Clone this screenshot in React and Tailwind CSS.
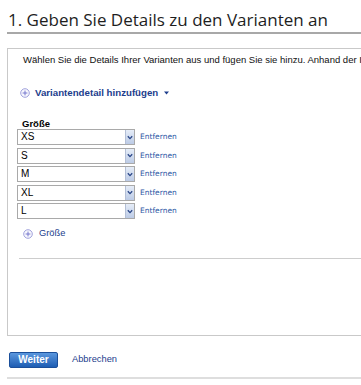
import { useState } from 'react';

const sizes = ['XS', 'S', 'M', 'XL', 'L'];

function PlusIcon() {
  return (
    <svg width="10" height="10" viewBox="0 0 10 10" className="shrink-0">
      <circle cx="5" cy="5" r="4.3" fill="#f7f7fd" stroke="#9597d8" strokeWidth="0.9" />
      <path d="M5 2.6v4.8M2.6 5h4.8" stroke="#6c6ec9" strokeWidth="0.9" />
    </svg>
  );
}

function SizeSelect({ value }) {
  return (
    <div className="flex items-center h-[16px]">
      <div className="flex items-stretch w-[118px] h-[16px] border border-[#a9a9a9] bg-white">
        <div className="flex-1 pl-[3px] text-[10px] leading-[14px] text-black">{value}</div>
        <div className="w-[9px] flex items-center justify-center border-l border-[#b3bfd6] bg-gradient-to-b from-[#e6edf8] to-[#bccbe6]">
          <svg width="6" height="5" viewBox="0 0 6 5">
            <path d="M0.8 1.2L3 3.6L5.2 1.2" fill="none" stroke="#2a4687" strokeWidth="1.3" />
          </svg>
        </div>
      </div>
      <a className="ml-[5px] text-[7.5px] leading-[10px] text-[#2a56a3] font-['DejaVu_Sans',sans-serif] cursor-pointer">
        Entfernen
      </a>
    </div>
  );
}

export default function App() {
  const [items] = useState(sizes);

  return (
    <div className="w-[361px] h-[385px] overflow-hidden bg-white pl-[7px] font-['Liberation_Sans',Arial,sans-serif]">
      <h1 className="pt-[9px] pb-[1px] pl-[1px] text-[17px] leading-[22px] text-[#1e1e1e] font-['Open_Sans',sans-serif] font-normal border-b-2 border-[#a8a8a8] whitespace-nowrap">
        1. Geben Sie Details zu den Varianten an
      </h1>

      <div className="mt-[14px] w-[370px] h-[288px] border border-[#c9c9c9] flex flex-col overflow-hidden">
        <p className="mt-[5px] ml-[15px] text-[9.5px] leading-[12px] text-[#111] whitespace-nowrap">
          Wählen Sie die Details Ihrer Varianten aus und fügen Sie sie hinzu. Anhand der I
        </p>

        <div className="mt-[21px] ml-[12px] flex items-center h-[12px] gap-[5px]">
          <PlusIcon />
          <span className="text-[9.7px] font-bold text-[#1c3d8c]">Variantendetail hinzufügen</span>
          <svg width="5" height="4" viewBox="0 0 5 4" className="ml-[1px]">
            <path d="M0 0.5h5L2.5 3.5z" fill="#1c3d8c" />
          </svg>
        </div>

        <div className="mt-[19px] ml-[14px] text-[9.5px] leading-[11px] font-bold text-black">Größe</div>

        <div className="ml-[9px] flex flex-col gap-[2.5px]">
          {items.map((s) => (
            <SizeSelect key={s} value={s} />
          ))}
        </div>

        <div className="mt-[9px] ml-[15px] flex items-center h-[12px] gap-[6px]">
          <PlusIcon />
          <span className="text-[9.3px] text-[#1c3d8c]">Größe</span>
        </div>

        <div className="mt-[18px] ml-[11px] border-t border-[#cdcdcd]" />
      </div>

      <div className="mt-[16px] ml-[2px] flex items-center">
        <button className="w-[49px] h-[16px] rounded-[2px] border border-[#1b4f9a] bg-gradient-to-b from-[#5a97de] to-[#1d5db3] text-white text-[10px] font-bold leading-[14px]">
          Weiter
        </button>
        <a className="ml-[14px] text-[9.3px] text-[#1c3d8c] cursor-pointer">Abbrechen</a>
      </div>

      <div className="mt-[9px] border-t-2 border-[#dedede]" />
    </div>
  );
}
